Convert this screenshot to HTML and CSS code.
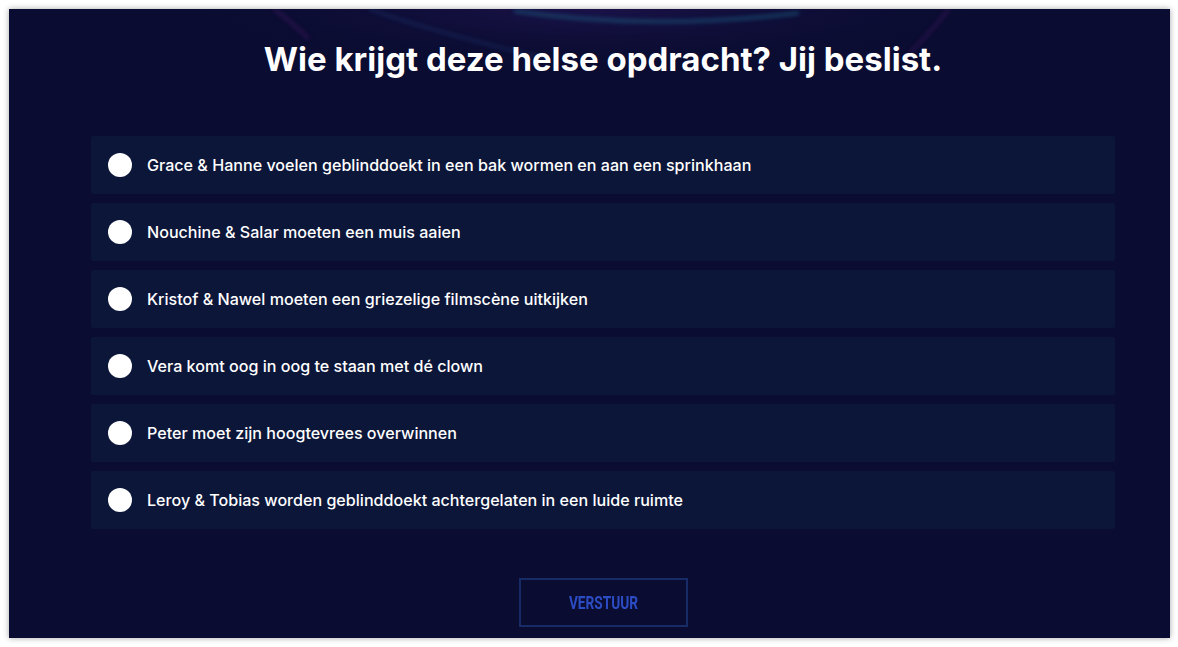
FILE: index.html
```html
<!DOCTYPE html>
<html lang="nl">
<head>
    <meta charset="UTF-8">
    <meta name="viewport" content="width=device-width, initial-scale=1.0">
    <title>Jij beslist</title>
    <link rel="stylesheet" href="styles.css">
</head>
<body>
    <div class="panel">
        <svg class="glow" width="1161" height="120" viewBox="0 0 1161 120">
            <defs>
                <filter id="blur" x="-20%" y="-50%" width="140%" height="200%">
                    <feGaussianBlur stdDeviation="2"/>
                </filter>
                <radialGradient id="haze" cx="0.5" cy="0" r="0.6">
                    <stop offset="0" stop-color="#2a1860" stop-opacity="0.5"/>
                    <stop offset="1" stop-color="#0a0c30" stop-opacity="0"/>
                </radialGradient>
            </defs>
            <rect x="200" y="0" width="760" height="110" fill="url(#haze)"/>
            <path d="M505 2 Q640 22 790 4" stroke="#1f6b8a" stroke-width="3" fill="none" filter="url(#blur)" opacity="0.6"/>
            <path d="M360 0 Q430 25 540 50" stroke="#1b3f78" stroke-width="2" fill="none" filter="url(#blur)" opacity="0.55"/>
            <path d="M265 0 Q285 15 300 30" stroke="#4a1a6a" stroke-width="3" fill="none" filter="url(#blur)" opacity="0.5"/>
            <path d="M940 0 Q920 25 900 45" stroke="#4a1a6a" stroke-width="3" fill="none" filter="url(#blur)" opacity="0.45"/>
        </svg>
        <div class="content">
            <h1>Wie krijgt deze helse opdracht? Jij beslist.</h1>
            <form class="poll">
                <label class="option"><span class="dot"></span>Grace &amp; Hanne voelen geblinddoekt in een bak wormen en aan een sprinkhaan</label>
                <label class="option"><span class="dot"></span>Nouchine &amp; Salar moeten een muis aaien</label>
                <label class="option"><span class="dot"></span>Kristof &amp; Nawel moeten een griezelige filmscène uitkijken</label>
                <label class="option"><span class="dot"></span>Vera komt oog in oog te staan met dé clown</label>
                <label class="option"><span class="dot"></span>Peter moet zijn hoogtevrees overwinnen</label>
                <label class="option"><span class="dot"></span>Leroy &amp; Tobias worden geblinddoekt achtergelaten in een luide ruimte</label>
                <div class="actions">
                    <button type="button"><span>VERSTUUR</span></button>
                </div>
            </form>
        </div>
    </div>
</body>
</html>
```

FILE: styles.css
```css
body {
    margin: 0;
    padding: 9px 8px 9px 9px;
    background-color: #ffffff;
    font-family: Inter, Roboto, "Liberation Sans", sans-serif;
}
.panel {
    position: relative;
    height: 629px;
    background-color: #0a0c31;
    box-shadow: 0 0 6px rgba(0,0,0,0.35);
    overflow: hidden;
}
.glow {
    position: absolute;
    top: 0;
    left: 0;
}
.content {
    position: relative;
    padding: 0 55px 0 82px;
}
h1 {
    margin: 0;
    padding-top: 31px;
    height: 127px;
    box-sizing: border-box;
    text-align: center;
    color: #ffffff;
    font-size: 33px;
    font-weight: 700;
    line-height: 38px;
}
.poll {
    display: flex;
    flex-direction: column;
    gap: 9px;
}
.option {
    display: flex;
    align-items: center;
    height: 58px;
    padding-left: 17px;
    background-color: #0c1639;
    border-radius: 2px;
    color: #ffffff;
    font-size: 16.1px;
    font-weight: 500;
}
.dot {
    width: 24px;
    height: 24px;
    margin-right: 15px;
    border-radius: 50%;
    background-color: #ffffff;
}
.actions {
    display: flex;
    justify-content: center;
    padding-top: 40px;
}
.actions button {
    width: 169px;
    height: 49px;
    padding: 0;
    background: transparent;
    border: 2px solid #172c66;
    color: #2c4cc4;
    font-family: Roboto, "Liberation Sans", sans-serif;
    font-weight: 700;
    font-size: 18px;
    cursor: pointer;
}
.actions button span {
    display: inline-block;
    transform: scaleX(0.76);
}
```
